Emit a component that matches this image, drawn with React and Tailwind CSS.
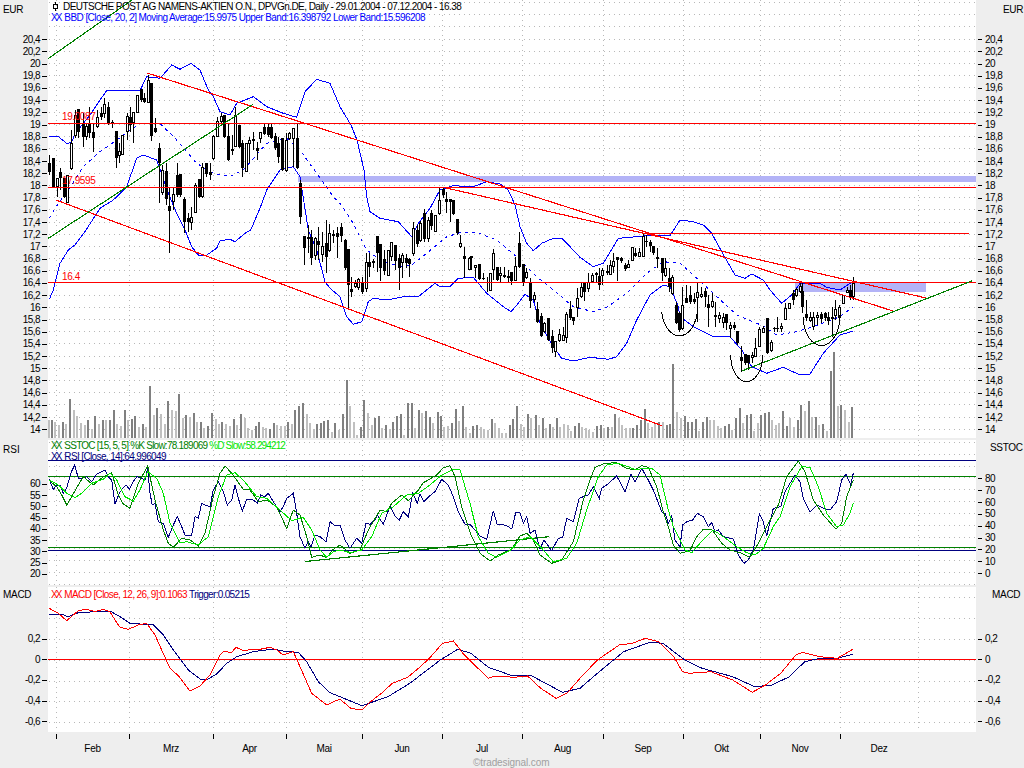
import React from "react";

const z = (x0, y0, sx, sy, a) => {
  const o = [];
  for (let i = 0; i < a.length; i += 2) o.push([x0 + a[i] / sx, y0 + a[i + 1] / sy]);
  return o;
};
const pts = (p) => p.map((q) => q[0].toFixed(1) + "," + q[1].toFixed(1)).join(" ");

const upper = [
  ...z(0, 0, 3, 3, [147,408,175,410,200,430,214,428,226,400,270,345,300,300,320,272,390,272,420,272,440,230,480,235,515,195,540,208,573,190,600,210,625,270,640,290,660,335,690,345,710,310,760,290,800,320,850,340,890,352,915,275,950,238,990,250,1020,320]),
  [351,125],[357,140],
  ...z(340, 170, 3, 3, [72,0,80,80,90,125,120,145,175,155,215,200,235,160,270,115,300,60,340,47,400,50,440,35,480,42,505,60,525,105,540,170,560,220,580,242,605,220,640,205,665,205,690,230,720,262,760,290,790,280,835,205,890,200,940,195,990,197,1020,150]),
  ...z(680, 200, 3, 3, [40,65,70,75,95,100,125,155,165,225,195,235,215,222,250,240,270,270,305,310,335,285,360,250,420,250,440,262,480,270,510,250,522,245]),
];
const lower = [
  ...z(0, 230, 3, 3, [148,208,160,180,180,100,205,60,225,45,240,25,258,0]),
  ...z(0, 0, 3, 3, [300,625,340,600,380,560,410,475,430,465,470,480,505,580,530,640]),
  ...z(0, 230, 3, 3, [555,0,575,50,595,75,620,75,650,55,660,32,690,28,705,35,735,10,752,0]),
  ...z(0, 0, 3, 3, [780,625,800,570,840,510,880,500,900,530]),
  ...z(0, 230, 3, 3, [925,0,950,60,975,155,990,175,1020,200]),
  ...z(340, 170, 3, 3, [20,440,40,463,65,455,85,395,100,385,140,390,190,380,235,380,285,340,300,350,330,350,355,325,400,322,440,370,490,410,513,425,535,400,555,373,580,390,600,460,640,530,665,565,700,573,750,562,805,568,830,560,860,520,890,450,930,375,970,345,990,350,1015,410]),
  ...z(680, 200, 3, 3, [0,350,40,380,95,408,150,410,185,450,215,500,260,520,310,502,360,525,390,522,430,460,480,405,520,393]),
];
const middle = [
  ...z(0, 0, 3, 3, [147,655,175,610,205,570,250,500,300,455,350,420,420,370,480,370,530,420,590,490,640,520,690,530,730,510,800,430,860,415,900,450,950,520,1000,590,1020,610]),
  ...z(340, 170, 3, 3, [40,160,80,240,120,270,180,290,215,285,260,250,320,200,365,187,410,187,470,210,530,260,590,320,640,360,700,410,760,425,800,412,860,370,920,310,970,275,1020,280]),
  ...z(680, 200, 3, 3, [40,225,100,280,170,345,250,378,290,405,350,395,400,380,480,350,520,320]),
];

const rsi = [
  ...z(0, 430, 3, 3, [148,148,160,178,170,165,180,165,190,190,200,175,212,130,224,105,235,145,245,145,260,140,275,155,290,132,315,120,325,140,335,150,345,222,358,190,368,175,378,165,388,178,400,155,410,140,425,145,435,150,443,115,450,190,457,225,465,220,475,275,490,280,505,322,520,285,532,260,545,290,555,315,575,315,585,260,595,265,605,220,615,225,630,230,640,180,655,155,670,185,682,225,695,210,705,165,715,205,727,243,740,208,760,210,772,220,782,195,795,200,805,190,820,215,830,230,840,245,850,230,860,205,880,190,890,250,900,320,915,355,925,335,933,352,945,315,960,320,978,335,990,275,1005,287,1020,285]),
  ...z(340, 430, 3, 3, [15,330,30,355,50,325,65,340,78,280,90,283,105,270,112,255,130,283,150,228,165,258,178,270,190,245,205,260,218,190,232,220,240,192,252,215,272,195,285,185,305,148,325,165,340,200,355,245,375,283,390,283,405,300,420,318,440,328,460,242,472,285,485,283,500,287,515,297,527,248,540,248,550,280,560,260,570,310,585,300,600,358,612,330,635,362,655,325,668,322,680,265,700,275,718,205,730,200,745,195,760,170,778,205,785,175,800,165,830,138,855,185,873,133,885,155,905,115,925,150,940,180,965,245,975,250,985,280,995,258,1005,330,1020,350]),
  ...z(680, 430, 3, 3, [8,285,20,275,38,270,52,250,70,260,85,290,95,278,105,305,115,300,130,320,160,327,175,375,192,400,205,390,220,360,238,252,250,275,260,318,280,235,302,230,315,185,345,135,360,155,370,205,390,245,412,225,430,235,450,240,470,215,485,150,498,132,512,165,520,130]),
];
const stK = [
  ...z(0, 430, 3, 3, [148,152,170,170,185,195,200,225,215,200,235,165,250,140,280,165,310,140,335,128,355,195,370,222,390,235,415,160,443,108,465,210,490,300,505,340,520,352,545,325,570,330,595,348,615,310,640,200,660,130,675,108,695,130,730,178,750,180,775,215,800,210,830,230,860,295,880,240,900,255,920,320,935,382,960,375,980,383,1000,358,1020,345]),
  ...z(340, 430, 3, 3, [30,370,60,360,85,300,120,240,140,245,155,220,185,195,205,212,235,180,250,158,265,150,290,135,310,113,330,107,345,140,365,230,395,320,420,370,450,393,475,375,515,358,540,318,560,310,580,330,600,375,635,400,665,390,700,335,730,210,750,150,765,112,795,100,830,98,860,115,885,120,905,107,925,112,950,170,970,245,985,290,1000,345,1020,370]),
  ...z(680, 430, 3, 3, [30,362,50,320,70,298,95,298,125,340,150,360,180,368,210,382,235,340,260,290,295,225,320,140,355,93,375,125,400,210,430,255,468,298,485,280,500,200,520,150]),
];
const stD = [
  ...z(0, 430, 3, 3, [148,150,175,165,200,190,225,203,245,190,275,160,310,148,330,130,350,150,375,200,400,213,420,180,443,125,470,145,490,190,510,280,540,338,560,335,595,345,625,320,655,200,680,135,705,128,730,150,770,200,800,205,840,240,875,272,910,262,935,300,960,360,980,382,1000,365,1020,360]),
  ...z(340, 430, 3, 3, [30,368,65,360,95,320,125,250,160,230,200,195,235,190,270,165,305,135,340,118,360,120,390,220,415,320,445,370,470,382,510,362,540,330,570,320,605,355,640,395,680,385,710,340,740,240,775,140,800,105,835,100,885,118,935,115,960,135,985,240,1000,290,1020,330]),
  ...z(680, 430, 3, 3, [15,360,35,368,60,340,100,300,130,320,170,350,200,368,225,375,250,355,280,290,300,260,330,170,365,110,390,112,415,170,440,250,470,290,490,285,510,250,520,220]),
];
const macd = [
  ...z(0, 580, 3, 3, [148,85,175,100,200,122,220,105,235,92,260,88,285,95,310,88,330,95,345,120,360,142,385,148,415,135,440,130,465,165,485,210,510,265,535,287,570,333,600,318,630,285,660,225,670,215,695,217,708,202,730,212,760,208,780,208,810,202,830,210,850,225,880,215,900,260,935,340,980,375,1000,365,1020,358]),
  ...z(340, 590, 2.292, 3, [25,355,50,360,70,335,95,310,120,280,155,262,180,235,205,205,235,160,260,153,285,195,340,265,355,258,400,262,430,258,460,295,495,325,520,310,550,265,590,210,640,165,670,160,700,145,730,155,765,200,785,245,800,250,850,245,900,270,945,307,975,285,1010,250,1045,195,1060,187,1100,200,1140,205,1175,178]),
];
const trigger = [
  ...z(0, 580, 3, 3, [148,103,185,103,205,110,235,98,285,95,330,93,360,110,390,130,460,135,490,165,520,210,565,270,600,297,625,297,650,282,680,250,710,230,760,215,820,207,860,215,895,217,920,245,955,305,990,338,1020,350]),
  ...z(340, 590, 2.292, 3, [50,347,110,320,160,280,230,210,270,178,300,190,340,232,390,255,440,258,510,307,550,295,590,250,650,185,710,157,740,160,790,210,830,235,900,260,950,290,990,285,1030,260,1065,215,1100,205,1140,205,1175,193]),
];

// candles: [x, top, bottom, high, low, filled], in zoom pixels (3x) of each crop
const seg = (x0, y0, rows) =>
  rows.map((r) => ({ x: Math.round(x0 + r[0] / 3), t: y0 + r[1] / 3, b: y0 + r[2] / 3, h: y0 + r[3] / 3, l: y0 + r[4] / 3, f: r[5] }));
const candles = [
  ...seg(0, 0, [
    [148,490,515,465,525,1],[160,475,560,475,565,1],[170,535,560,535,590,0],[181,517,533,505,570,1],[192,535,590,535,595,1],[202,525,607,525,607,0],[214,430,505,390,510,0],[224,345,405,330,415,0],[235,328,395,328,415,1],[248,373,412,340,440,1],[258,380,408,370,420,0],[268,373,400,320,415,1],[280,397,413,370,455,1],[290,352,380,330,385,0],[302,340,352,320,360,1],[313,313,340,293,355,0],[324,320,370,305,375,1],[335,365,372,360,385,1],[347,393,475,393,505,1],[356,453,465,430,490,0],[367,405,463,405,465,0],[380,350,393,340,420,0],[390,352,375,322,395,1],[400,337,368,337,430,0],[410,285,337,285,340,0],[422,268,300,268,305,1],[433,295,305,280,310,1],[443,240,307,225,310,0],[454,248,407,248,423,1],[466,385,395,355,400,1],[476,445,490,430,610,1],[487,512,577,495,585,0],[498,512,598,490,615,1],[508,618,632,560,760,1],[520,583,605,565,630,0],[531,525,585,490,590,1],[541,522,585,522,590,1],[553,597,667,590,700,1],[563,653,667,640,695,1],[574,653,667,620,690,0],[585,555,637,550,640,0],[596,537,590,537,595,1],[607,502,590,488,595,0],[618,488,522,488,530,1],[630,515,525,490,540,1],[640,410,475,405,480,0],[651,365,408,350,410,0],[662,350,365,340,370,0],[673,345,410,345,415,1],[684,408,480,370,482,1],[695,447,452,405,465,1],[706,345,440,320,442,0],[716,375,440,375,445,1],[727,430,505,420,530,1],[738,430,515,430,517,0],[748,422,430,410,490,0],[760,418,423,395,450,1],[771,445,452,425,480,1],[781,398,415,395,430,0],[792,380,402,370,405,1],[803,380,405,370,410,1],[814,382,415,370,418,1],[825,408,445,400,450,1],[835,430,472,410,490,1],[846,415,510,415,512,1],[857,420,510,400,515,0],[868,400,415,395,420,0],[880,385,414,385,500,0],[890,413,505,370,508,1],[900,550,650,540,672,1]]),
  ...seg(0, 230, [
    [912,18,55,18,105,1],[925,20,28,-15,70,1],[933,20,85,0,105,1],[946,25,75,22,90,0],[955,33,45,-10,90,1],[967,50,72,5,95,0],[978,38,80,-30,128,1],[988,10,60,-18,65,0],[1000,12,17,0,40,1],[1012,8,20,-10,85,1]]),
  ...seg(340, 170, [
    [3,172,197,160,215,1],[14,210,295,207,300,1],[24,237,345,237,415,1],[34,357,367,320,380,1],[45,340,350,330,355,0],[55,327,352,325,360,0],[67,340,365,320,372,1],[78,277,355,250,365,0],[88,277,290,250,320,1],[100,273,278,268,293,0],[111,197,250,197,305,1],[121,222,295,222,333,1],[133,268,303,240,315,1],[143,240,317,240,318,0],[154,217,258,215,272,0],[166,225,272,225,300,1],[177,265,293,253,360,1],[187,257,277,250,325,0],[198,265,280,253,295,1],[208,268,283,265,320,1],[220,175,250,155,258,0],[231,180,223,165,232,1],[241,160,210,153,215,0],[253,130,207,118,215,1],[265,150,205,140,215,0],[274,130,167,120,180,1],[286,135,183,135,185,0],[298,90,130,55,135,0],[308,58,75,55,85,1],[318,88,95,65,130,1],[329,88,95,88,155,1],[340,90,133,90,135,1],[352,148,188,148,195,1],[361,220,230,195,233,0],[373,258,268,230,325,1],[386,265,297,262,300,0],[394,258,265,258,300,1],[406,285,292,285,325,0],[417,282,327,282,330,1],[428,325,327,310,330,1],[440,335,340,320,365,1],[449,310,360,310,362,0],[460,250,298,238,330,0],[471,290,330,290,332,1],[481,310,317,290,335,0],[493,315,320,290,325,1],[504,317,323,300,335,1],[514,307,333,305,345,1],[525,290,330,262,333,0],[537,220,290,185,295,1],[548,283,335,283,348,1],[559,307,323,295,328,0],[571,335,392,325,415,1],[581,375,388,365,395,0],[591,418,455,395,460,1],[603,438,497,430,500,1],[613,460,485,455,490,0],[625,445,510,445,512,1],[635,498,533,480,550,1],[646,513,545,513,560,0],[657,493,510,478,515,0],[668,495,510,470,512,0],[679,432,503,425,520,0],[690,418,445,393,450,1],[700,440,452,440,466,1],[712,385,412,355,440,0],[722,352,380,335,385,0],[733,338,365,338,393,1],[745,338,355,310,365,0],[755,315,335,310,338,0],[767,308,314,305,340,1],[778,317,345,293,360,1],[787,302,317,295,345,0],[800,302,308,285,315,1],[810,285,312,270,315,0],[820,273,288,250,310,0],[832,262,270,260,333,1],[842,265,272,260,280,1],[854,285,298,280,302,1],[865,283,292,270,295,0],[875,233,270,230,272,0],[886,248,258,235,262,1],[898,248,260,233,262,0],[908,198,258,190,262,0],[919,213,217,195,232,1],[930,215,228,210,245,1],[940,228,250,228,255,1],[952,260,268,233,295,1],[965,265,310,265,333,1],[975,295,317,265,320,0],[986,323,350,295,365,1],[996,322,370,315,375,0],[1007,405,458,395,462,1],[1018,430,480,425,485,1]]),
  ...seg(680, 200, [
    [5,315,385,260,390,0],[18,295,308,255,310,1],[29,285,305,258,312,1],[41,298,305,280,312,1],[52,278,292,245,365,0],[64,282,290,260,295,0],[74,273,290,265,320,1],[85,313,323,285,380,1],[95,303,318,278,325,0],[105,345,352,305,380,1],[117,345,355,335,370,0],[128,352,368,340,385,0],[139,342,370,342,390,1],[151,375,385,365,415,0],[161,375,383,365,390,1],[172,393,430,393,435,1],[184,470,482,437,515,1],[194,463,490,463,495,1],[204,465,490,465,510,1],[216,467,472,455,490,0],[226,445,470,415,472,0],[238,387,440,380,442,0],[248,385,398,378,400,0],[260,355,460,355,462,1],[272,427,452,420,455,0],[282,385,388,380,395,1],[292,385,388,350,395,1],[304,378,385,368,395,0],[314,325,358,310,360,0],[326,310,325,310,328,0],[338,280,300,270,315,1],[348,268,285,265,290,0],[360,258,275,250,278,0],[367,272,322,250,340,1],[379,343,355,300,362,1],[390,352,360,335,365,0],[400,352,378,335,390,0],[412,345,353,335,375,0],[423,342,358,335,368,1],[434,340,355,335,362,1],[445,352,362,335,375,1],[457,350,358,320,410,1],[466,328,345,300,360,0],[477,323,352,315,355,0],[488,287,310,285,312,0],[500,270,277,260,280,0],[510,270,290,255,300,1],[520,250,290,232,300,0]]),
];

const vseg = (x0, y0, rows) => rows.map((r) => ({ x: Math.round(x0 + r[0] / 3), t: y0 + r[1] / 3, d: r[2] }));
const volume = [
  ...vseg(0, 230, [[147,570,0],[155,570,1],[166,576,0],[177,585,0],[188,575,1],[198,582,0],[210,507,1],[221,540,0],[231,558,0],[242,578,0],[254,585,0],[264,570,1],[275,596,0],[285,558,1],[296,582,0],[308,570,1],[318,570,0],[329,570,1],[342,540,1],[351,582,0],[363,588,0],[374,540,1],[384,570,0],[395,567,1],[405,558,1],[416,592,0],[428,582,1],[438,592,0],[450,468,1],[461,555,0],[471,533,1],[483,552,0],[494,582,0],[504,513,1],[516,540,0],[527,543,0],[537,492,1],[548,564,0],[558,555,1],[570,561,0],[581,549,1],[591,576,0],[602,575,1],[613,595,0],[624,588,1],[635,549,1],[647,567,0],[657,582,0],[667,576,1],[678,582,0],[690,588,0],[702,567,1],[711,585,0],[722,552,1],[734,564,0],[744,594,0],[755,600,0],[767,588,1],[777,576,1],[788,591,0],[799,595,0],[809,597,1],[821,579,1],[831,585,0],[842,588,0],[854,588,0],[864,576,1],[875,582,0],[886,540,1],[896,528,1],[908,519,1],[920,552,0],[930,579,0],[941,597,0],[951,582,1],[963,579,1],[973,573,1],[984,570,1],[996,606,0],[1006,579,1],[1017,600,0]]),
  ...vseg(340, 170, [[8,732,1],[20,630,1],[30,708,0],[41,755,0],[52,795,0],[62,770,1],[73,690,1],[83,730,0],[95,765,0],[105,745,1],[116,738,1],[127,775,0],[139,765,1],[149,778,0],[160,755,1],[171,737,1],[183,732,1],[193,795,0],[203,700,1],[215,700,1],[225,775,0],[237,720,1],[247,730,0],[258,722,1],[270,740,1],[280,760,0],[293,725,1],[303,737,1],[313,770,0],[325,768,0],[335,760,1],[347,717,1],[357,752,0],[368,708,1],[379,770,0],[390,790,0],[400,768,1],[412,765,1],[423,772,0],[433,776,0],[445,780,0],[455,747,1],[465,760,0],[476,775,0],[487,790,0],[498,790,0],[509,765,1],[520,748,1],[532,708,1],[543,762,0],[553,770,0],[565,732,1],[574,745,0],[587,735,1],[597,765,0],[608,745,1],[618,775,0],[630,762,1],[640,770,0],[650,745,1],[660,770,0],[672,762,0],[684,765,0],[694,782,0],[705,768,1],[716,760,1],[727,772,0],[738,775,0],[748,780,0],[760,785,0],[772,768,1],[782,765,1],[793,775,0],[804,770,1],[815,770,0],[826,732,1],[836,745,0],[847,765,0],[858,775,0],[870,775,0],[880,775,1],[890,765,1],[902,750,1],[914,718,1],[925,760,0],[935,770,0],[946,760,0],[958,755,1],[968,755,0],[980,765,1],[990,763,1],[1000,583,1],[1012,725,0]]),
  ...vseg(680, 200, [[3,655,0],[14,648,1],[25,667,1],[36,665,1],[47,657,1],[58,692,0],[70,667,1],[80,652,1],[91,660,0],[102,660,0],[113,678,0],[124,685,0],[135,678,1],[146,672,1],[157,690,0],[168,655,1],[180,625,1],[190,668,0],[200,645,1],[212,643,1],[223,693,0],[234,668,0],[244,645,1],[254,638,1],[266,636,1],[277,660,0],[288,675,0],[298,668,0],[309,633,1],[320,678,1],[331,655,0],[341,682,0],[353,660,1],[363,615,1],[375,633,0],[386,603,1],[396,650,0],[408,650,1],[418,675,0],[429,672,1],[441,692,0],[452,513,1],[462,455,1],[474,618,0],[484,615,1],[495,630,0],[506,665,0],[516,622,1]]),
];

const gridX = [56.5, 129.5, 213.5, 286.5, 362.5, 442.5, 522.5, 603.5, 683.5, 760.5, 840.5, 918.5];
const range = (a, step, n) => Array.from({ length: n }, (_, i) => a + step * i);

const Grid = ({ ys, y0, y1 }) => (
  <g stroke="#b8b8b8" strokeWidth="1" strokeDasharray="1 4" shapeRendering="crispEdges">
    {ys.map((y) => (
      <line key={y} x1="49" x2="976" y1={Math.round(y) + 0.5} y2={Math.round(y) + 0.5} />
    ))}
    {gridX.map((x) => (
      <line key={x} x1={x} x2={x} y1={y0} y2={y1} />
    ))}
  </g>
);

const Line = ({ p, c, dash }) => (
  <polyline points={pts(p)} fill="none" stroke={c} strokeWidth="1" strokeDasharray={dash} shapeRendering="crispEdges" />
);
const Seg = ({ a, b, c }) => (
  <line x1={a[0]} y1={a[1]} x2={b[0]} y2={b[1]} stroke={c} strokeWidth="1.15" shapeRendering="crispEdges" />
);
const HLine = ({ y, c, x1 = 48, x2 = 976 }) => (
  <line x1={x1} x2={x2} y1={y} y2={y} stroke={c} strokeWidth="1" shapeRendering="crispEdges" />
);

const mainVals = ["20,4","20,2","20","19,8","19,6","19,4","19,2","19","18,8","18,6","18,4","18,2","18","17,8","17,6","17,4","17,2","17","16,8","16,6","16,4","16,2","16","15,8","15,6","15,4","15,2","15","14,8","14,6","14,4","14,2","14"];
const rsiVals = ["60","55","50","45","40","35","30","25","20"];
const stocVals = ["80","70","60","50","40","30","20","10","0"];
const macdVals = ["0,2","0","-0,2","-0,4","-0,6"];

const LeftRow = ({ v, h }) => (
  <div className={"flex items-center justify-end gap-[2px] pr-[1px] " + h}>
    <span className="tracking-[-0.55px] leading-none">{v}</span>
    <span className="w-[5px] h-px bg-black" />
  </div>
);
const RightRow = ({ v, h }) => (
  <div className={"flex items-center gap-[3px] pl-[2px] " + h}>
    <span className="w-[4px] h-px bg-black" />
    <span className="tracking-[-0.55px] leading-none">{v}</span>
  </div>
);

const Months = [
  ["Feb", "w-[73px]"],
  ["Mrz", "w-[84px]"],
  ["Apr", "w-[73px]"],
  ["Mai", "w-[76px]"],
  ["Jun", "w-[80px]"],
  ["Jul", "w-[80px]"],
  ["Aug", "w-[81px]"],
  ["Sep", "w-[80px]"],
  ["Okt", "w-[77px]"],
  ["Nov", "w-[80px]"],
  ["Dez", "w-[78px]"],
];

const XX = ({ c }) => <span className={"tracking-[-2px] mr-[4px] " + c}>XX</span>;

export default function App() {
  return (
    <div className="relative w-[1024px] h-[768px] overflow-hidden bg-[#eeeeee] text-black text-[10px] [font-family:'Liberation_Sans',Arial,sans-serif]">
      {/* main pane */}
      <div className="flex h-[438px]">
        <div className="w-[48px] shrink-0 flex flex-col">
          <div className="h-[33.6px] pt-[2px] pl-[3px] tracking-[-0.3px]">EUR</div>
          {mainVals.map((v) => <LeftRow key={v} v={v} h="h-[12.19px]" />)}
        </div>
        <div className="relative w-[928px] shrink-0 bg-white">
          <svg className="block" width="928" height="438" viewBox="48 0 928 438">
            <Grid ys={range(2.1, 12.19, 36)} y0={0} y1={438} />
            {volume.map((v, i) => (
              <rect key={i} x={v.x - 1} y={v.t} width="2" height={438 - v.t} fill={v.d ? "#808080" : "#c0c0c0"} shapeRendering="crispEdges" />
            ))}
            <rect x="298" y="176" width="678" height="6" fill="#b3b3f7" shapeRendering="crispEdges" />
            <rect x="795" y="282" width="131" height="10" fill="#b3b3f7" shapeRendering="crispEdges" />
            <Line p={upper} c="#0000ff" />
            <Line p={lower} c="#0000ff" />
            <Line p={middle} c="#0000ff" dash="3 4" />
            {candles.map((c, i) => (
              <g key={i} shapeRendering="crispEdges">
                <line x1={c.x + 0.5} x2={c.x + 0.5} y1={c.h} y2={c.l} stroke="#000" />
                {c.f ? (
                  <rect x={c.x - 1} y={c.t} width="3" height={Math.max(c.b - c.t, 1)} fill="#000" />
                ) : (
                  <rect x={c.x - 0.5} y={c.t} width="2" height={Math.max(c.b - c.t, 1)} fill="#fff" stroke="#000" />
                )}
              </g>
            ))}
            <HLine y={123.5} c="#ff0000" />
            <HLine y={187.5} c="#ff0000" />
            <HLine y={233.5} c="#ff0000" x1={642} x2={969} />
            <HLine y={282.5} c="#ff0000" />
            <Seg a={[147, 73]} b={[893, 311]} c="#ff0000" />
            <Seg a={[442, 187]} b={[926, 298]} c="#ff0000" />
            <Seg a={[56, 200]} b={[662, 425.7]} c="#ff0000" />
            <Seg a={[48, 58.7]} b={[132, 0]} c="#008000" />
            <Seg a={[48, 238.5]} b={[253, 104.5]} c="#008000" />
            <Seg a={[741.7, 371]} b={[971.7, 281]} c="#008000" />
            <g fill="none" stroke="#000" strokeWidth="1" shapeRendering="crispEdges">
              <path d="M661.7 311.7 A18 28.5 0 0 0 697.3 303" />
              <path d="M730.7 355 A16 26.7 0 0 0 762.7 355" />
              <path d="M803 316.7 A18.5 29.7 0 0 0 840 315" />
            </g>
          </svg>
          <div className="absolute left-[5px] top-[1px] flex flex-col leading-[11px]">
            <div className="flex items-center h-[11px] whitespace-nowrap tracking-[-0.55px]">
              <svg className="mr-[5px]" width="5" height="9" viewBox="0 0 5 9" fill="none" stroke="#000" shapeRendering="crispEdges"><path d="M2.5 0v2M2.5 7v2" /><rect x="0.5" y="2.5" width="4" height="4" /></svg>
              DEUTSCHE POST AG NAMENS-AKTIEN O.N., DPVGn.DE, Daily - 29.01.2004 - 07.12.2004 - 16.38
            </div>
            <div className="whitespace-nowrap text-[#0000ff] tracking-[-0.57px] -ml-[2px]">
              <XX c="text-[#0000ff]" />BBD [Close, 20, 2] Moving Average:15.9975 Upper Band:16.398792 Lower Band:15.596208
            </div>
          </div>
          <span className="absolute left-[14px] top-[112px] leading-none text-[#ff0000] tracking-[-0.4px]">19.0087</span>
          <span className="absolute left-[14px] top-[176px] leading-none text-[#ff0000] tracking-[-0.4px]">17.9595</span>
          <span className="absolute left-[14px] top-[272px] leading-none text-[#ff0000] tracking-[-0.4px]">16.4</span>
        </div>
        <div className="w-[48px] shrink-0 flex flex-col">
          <div className="h-[33.6px] pt-[2px] pl-[27px] tracking-[-0.3px]">EUR</div>
          {mainVals.map((v) => <RightRow key={v} v={v} h="h-[12.19px]" />)}
        </div>
      </div>

      {/* RSI / stochastic pane */}
      <div className="flex h-[145px] mt-[2px]">
        <div className="w-[48px] shrink-0 flex flex-col">
          <div className="h-[38.7px] pt-[2px] pl-[3px]">RSI</div>
          {rsiVals.map((v) => <LeftRow key={v} v={v} h="h-[11.25px]" />)}
        </div>
        <div className="relative w-[928px] shrink-0 bg-white">
          <svg className="block" width="928" height="145" viewBox="48 440 928 145">
            <Grid ys={range(442, 11.83, 13)} y0={440} y1={585} />
            <HLine y={460.5} c="#000080" />
            <HLine y={550.5} c="#000080" />
            <HLine y={476.5} c="#008000" />
            <HLine y={547.5} c="#008000" />
            <Seg a={[305, 561.5]} b={[549, 536.7]} c="#008000" />
            <Line p={rsi} c="#000080" />
            <Line p={stK} c="#008000" />
            <Line p={stD} c="#00e600" />
          </svg>
          <div className="absolute left-[3px] top-[1px] flex flex-col leading-[10.5px] whitespace-nowrap">
            <div className="text-[#008000] tracking-[-0.76px]">
              <XX c="text-[#008000]" />SSTOC [15, 5, 5] %K Slow:78.189069{" "}
              <span className="text-[#00e600] tracking-[-0.88px]">%D Slow:58.294212</span>
            </div>
            <div className="text-[#000080] tracking-[-0.63px]">
              <XX c="text-[#000080]" />RSI [Close, 14]:64.996049
            </div>
          </div>
        </div>
        <div className="w-[48px] shrink-0 flex flex-col">
          <div className="h-[33px] pl-[14px] tracking-[-0.3px]">SSTOC</div>
          {stocVals.map((v) => <RightRow key={v} v={v} h="h-[11.83px]" />)}
        </div>
      </div>

      {/* MACD pane */}
      <div className="flex h-[145px] mt-[2px]">
        <div className="w-[48px] shrink-0 flex flex-col">
          <div className="h-[42.5px] pl-[3px] tracking-[-0.3px]">MACD</div>
          {macdVals.map((v) => <LeftRow key={v} v={v} h="h-[20.9px]" />)}
        </div>
        <div className="relative w-[928px] shrink-0 bg-white">
          <svg className="block" width="928" height="145" viewBox="48 587 928 145">
            <Grid ys={range(596.9, 20.9, 7)} y0={587} y1={732} />
            <HLine y={659.5} c="#ff0000" />
            <Line p={trigger} c="#000080" />
            <Line p={macd} c="#ff0000" />
          </svg>
          <div className="absolute left-[3px] top-[2px] leading-[11px] whitespace-nowrap tracking-[-0.62px] text-[#ff0000]">
            <XX c="text-[#ff0000]" />MACD [Close, 12, 26, 9]:0.1063{" "}
            <span className="text-[#000080] tracking-[-0.68px]">Trigger:0.05215</span>
          </div>
        </div>
        <div className="w-[48px] shrink-0 flex flex-col">
          <div className="h-[42.5px] pl-[16px] tracking-[-0.3px]">MACD</div>
          {macdVals.map((v) => <RightRow key={v} v={v} h="h-[20.9px]" />)}
        </div>
      </div>

      {/* time axis */}
      <div className="flex pl-[56px]">
        {Months.map(([m, w]) => (
          <div key={m} className={"flex flex-col shrink-0 " + w}>
            <span className="w-px h-[5px] mt-[2px] bg-black" />
            <span className="text-center leading-none mt-[5px] tracking-[-0.3px]">{m}</span>
          </div>
        ))}
      </div>
      <div className="mt-[4px] pl-[473px] leading-none text-[#a0a0a0] tracking-[-0.1px]">©tradesignal.com</div>
    </div>
  );
}
